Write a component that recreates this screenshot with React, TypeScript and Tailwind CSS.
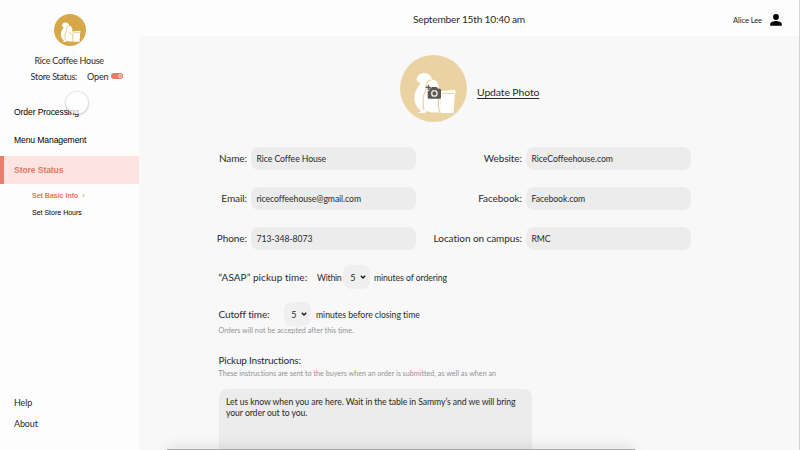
import React from "react";

function Mascot({ className, disc }: { className: string; disc: string }) {
  return (
    <svg viewBox="0 0 67 67" className={className}>
      <circle cx="33.5" cy="33.5" r="33.5" fill={disc} />
      <path
        d="M20.500 28c-3.500-1-4.500-3-3.500-5.500 1-3 4-4.500 7-4.500 4.500 0 7.500 3 8 6.500 3.500.3 5.500 2 6 5.500l1 2-1.500 1.500c2 3 2.500 6 2.500 9L41 57.500H31l-4-1.500-2 2h-7l3-2c-5-4-7-9-6.500-15 .5-6 4-9 6-13z"
        fill="#fff"
      />
      <path d="M40.500 36l14.500-1 1 3-1.200.500L53.500 58H40.500z" fill="#fff" />
      <path
        d="M31.500 25c-3 0-5.500 2.500-5.500 6 1 3 0 4-1.500 7-2 5-2 10-.5 17M42 38.500h12M38.500 43c-.5 6-.5 9 1.500 15M31 37c1.500 4 4 5 8 5"
        fill="none"
        stroke={disc}
        strokeWidth="1.2"
      />
    </svg>
  );
}

function CameraPlus() {
  return (
    <svg viewBox="0 0 18 18" className="absolute left-[24px] top-[28.5px] size-[18px]">
      <path
        d="M5.200 5.200h2l.6-1.200h5l1.100 1.700h1.800q1.300 0 1.300 1.300v7.400q0 1.300-1.300 1.300H5q-1.300 0-1.300-1.300V7.800h1.500z"
        fill="#5c5954"
      />
      <circle cx="10.400" cy="10.400" r="2.700" fill="none" stroke="#f4ede0" strokeWidth="1.300" />
      <path d="M4.300 1.800v5.200M1.700 4.400h5.200" stroke="#5c5954" strokeWidth="1.200" />
    </svg>
  );
}

function Chevron() {
  return (
    <svg viewBox="0 0 6 4" className="h-[4px] w-[6px]">
      <path d="M.8.8 3 3 5.2.8" fill="none" stroke="#111" strokeWidth="1.3" />
    </svg>
  );
}

function Field({ label, value }: { label: string; value: string }) {
  return (
    <div className="flex h-[23.5px] items-center justify-end">
      <span className="mr-[4px] text-[10px] tracking-[-0.07px]">{label}</span>
      <div className="flex h-full w-[165px] items-center rounded-[8px] bg-[#ececec] pl-[5.5px]">
        <span className="text-[8.7px] tracking-[-0.08px]">{value}</span>
      </div>
    </div>
  );
}

function Minutes() {
  return (
    <div className="flex h-[23.5px] w-[26.5px] shrink-0 items-center justify-end gap-[4px] rounded-[8px] bg-[#efefef] pr-[4px]">
      <span className="pt-[1px] text-[9px]">5</span>
      <Chevron />
    </div>
  );
}

function Sidebar() {
  return (
    <aside className="relative flex h-full w-[138.5px] shrink-0 flex-col bg-[#fdfdfd]">
      <Mascot disc="#d7a849" className="ml-[53.5px] mt-[14px] size-[32px] shrink-0" />
      <div className="mt-[8px] h-[13px] pl-[34.5px] text-[9px] leading-[13px] tracking-[-0.24px]">Rice Coffee House</div>
      <div className="mt-[2.5px] flex h-[13px] items-center pl-[30.5px] text-[9px] leading-[13px]">
        <span className="w-[56.5px] tracking-[-0.25px]">Store Status:</span>
        <span className="w-[23.5px] tracking-[-0.1px]">Open</span>
        <span className="flex h-[6.5px] w-[12.5px] items-center justify-end rounded-full bg-[#e87a66] pr-[1px]">
          <span className="size-[4px] rounded-full border border-[#fbd5cd]" />
        </span>
      </div>
      <nav className="mt-[15px] flex flex-col font-['Liberation_Sans',sans-serif] text-[8.6px] text-black">
        <span className="h-[28.5px] pl-[14px] leading-[29px] tracking-[-0.12px]">Order Processing</span>
        <span className="h-[29.5px] pl-[14px] leading-[28px] tracking-[-0.12px]">Menu Management</span>
        <span className="h-[28.5px] border-l-4 border-[#e77f6b] bg-[#fde4e3] pl-[10px] font-bold leading-[29px] tracking-[-0.1px] text-[#e4775f]">
          Store Status
        </span>
        <span className="mt-[4px] flex h-[17px] items-center pl-[32px] text-[7px] font-bold text-[#e4775f]">
          Set Basic Info <span className="ml-[4px] font-normal">›</span>
        </span>
        <span className="h-[17px] pl-[32px] text-[7px] leading-[16px]">Set Store Hours</span>
      </nav>
      <div className="mb-[16px] mt-auto flex flex-col text-[9px] leading-[20.5px] tracking-[-0.15px]">
        <span className="pl-[14px]">Help</span>
        <span className="pl-[14px]">About</span>
      </div>
      <div className="absolute left-[66px] top-[91.5px] size-[22px] rounded-full bg-[#fdfdfd]/70 shadow-[0_0.5px_2.5px_rgba(0,0,0,0.4)]" />
    </aside>
  );
}

export default function App() {
  return (
    <div className="relative flex h-[450px] w-[800px] overflow-hidden border-r border-[#d4d4d4] bg-[#f8f8f8] font-[Lato,sans-serif] text-[#2a2a2a] [font-variant-ligatures:none]">
      <Sidebar />
      <div className="flex min-w-0 flex-1 flex-col">
        <header className="flex h-[35.5px] shrink-0 items-center bg-[#fdfdfd] pl-[274.5px] pt-[4px]">
          <span className="w-[320px] text-[10.2px] tracking-[-0.22px]">September 15th 10:40 am</span>
          <span className="w-[36.5px] pt-[1px] text-[7.6px] tracking-[-0.1px]">Alice Lee</span>
          <svg viewBox="0 0 12 12" className="size-[12px]">
            <circle cx="6" cy="3" r="2.9" fill="#000" />
            <path d="M.2 11.700V10c0-2 3.700-3 5.800-3s5.800 1 5.800 3v1.700z" fill="#000" />
          </svg>
        </header>
        <main className="flex flex-col">
          <div className="mt-[19px] flex h-[67px] items-center pl-[261.5px]">
            <div className="relative size-[67px]">
              <Mascot disc="#ead2a2" className="size-full" />
              <CameraPlus />
            </div>
            <span className="ml-[10px] mt-[10px] text-[10.4px] tracking-[-0.1px] underline underline-offset-[1.5px]">
              Update Photo
            </span>
          </div>
          <div className="mt-[25px] grid w-[552.5px] grid-cols-[277.5px_275px] gap-y-[16.5px]">
            <Field label="Name:" value="Rice Coffee House" />
            <Field label="Website:" value="RiceCoffeehouse.com" />
            <Field label="Email:" value="ricecoffeehouse@gmail.com" />
            <Field label="Facebook:" value="Facebook.com" />
            <Field label="Phone:" value="713-348-8073" />
            <Field label="Location on campus:" value="RMC" />
          </div>
          <div className="mt-[15px] flex h-[23.5px] items-center pl-[80px] text-[8.7px] tracking-[-0.08px]">
            <span className="w-[98.5px] pt-[2px] text-[10px] tracking-[0.06px]">“ASAP” pickup time:</span>
            <span className="w-[26px] pt-[2px] tracking-[-0.25px]">Within</span>
            <Minutes />
            <span className="ml-[4.500px] pt-[2px]">minutes of ordering</span>
          </div>
          <div className="mt-[13.5px] flex h-[23.5px] items-center pl-[80px] text-[8.7px] tracking-[-0.05px]">
            <span className="w-[65.5px] pt-[2px] text-[10px] tracking-[-0.15px]">Cutoff time:</span>
            <Minutes />
            <span className="ml-[5.500px] pt-[1px]">minutes before closing time</span>
          </div>
          <p className="h-[10px] pl-[80px] text-[7.2px] leading-[10px] tracking-[0.03px] text-[#939393]">
            Orders will not be accepted after this time.
          </p>
          <h2 className="mt-[17px] h-[14px] pl-[80px] text-[10px] leading-[14px] tracking-[-0.2px]">
            Pickup Instructions:
          </h2>
          <p className="mt-[1px] h-[10px] pl-[80px] text-[7.2px] leading-[11px] text-[#939393]">
            These instructions are sent to the buyers when an order is submitted, as well as when an
          </p>
          <div className="ml-[80px] mt-[11.500px] h-[70px] w-[313.5px] rounded-[8px] bg-[#ececec] pl-[7.5px] pt-[7px] text-[8.7px] leading-[11.3px] tracking-[-0.09px]">
            Let us know when you are here. Wait in the table in Sammy’s and we will bring
            <br />
            your order out to you.
          </div>
        </main>
      </div>
      <div className="absolute -bottom-px left-[167px] h-[2px] w-[468px] bg-[#aaa] shadow-[0_0_12px_rgba(0,0,0,0.4)]" />
    </div>
  );
}
